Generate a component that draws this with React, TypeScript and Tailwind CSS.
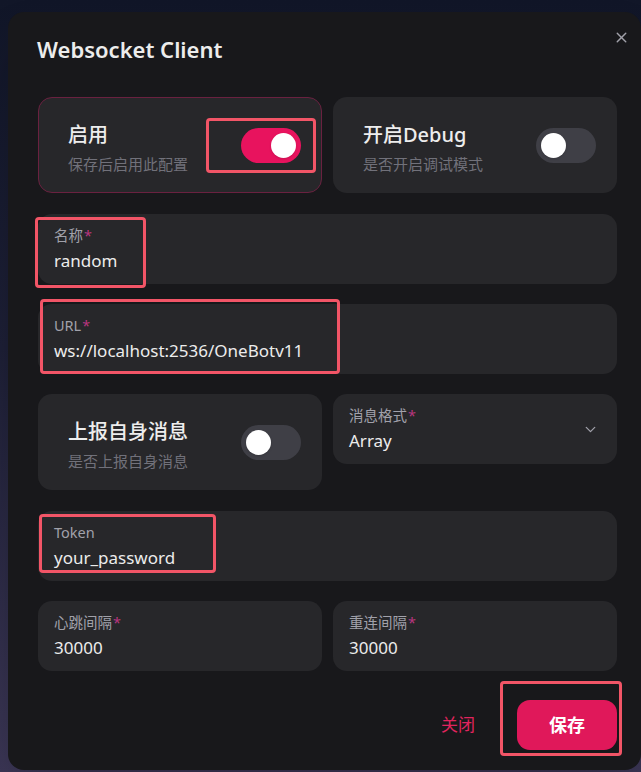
import { X, ChevronDown } from "lucide-react";

const font = "font-['Noto_Sans','Noto_Sans_CJK_SC',sans-serif]";

function Switch({ on }: { on: boolean }) {
  return (
    <div
      className={
        on
          ? "w-[60px] h-[35px] rounded-full bg-[#e8135e] flex items-center justify-end px-[5px] shrink-0"
          : "w-[60px] h-[35px] rounded-full bg-[#3f3f46] flex items-center justify-start px-[5px] shrink-0"
      }
    >
      <div className="w-[25px] h-[25px] rounded-full bg-white shadow-sm" />
    </div>
  );
}

function SwitchCard({ title, desc, on, active }: { title: string; desc: string; on: boolean; active?: boolean }) {
  return (
    <div
      className={
        active
          ? "h-[96px] rounded-[14px] bg-[#27272a] border border-[#6a2140] flex items-center justify-between pl-[29px] pr-[20px]"
          : "h-[96px] rounded-[14px] bg-[#27272a] flex items-center justify-between pl-[30px] pr-[21px]"
      }
    >
      <div className="flex flex-col gap-[5px] pt-[5px]">
        <div className="text-[20px] leading-[28px] font-medium text-[#ededed]">{title}</div>
        <div className="text-[15px] leading-[20px] text-[#71717a]">{desc}</div>
      </div>
      <Switch on={on} />
    </div>
  );
}

function Field({ label, value, required, chevron, className = "" }: { label: string; value: string; required?: boolean; chevron?: boolean; className?: string }) {
  return (
    <div className={"h-[70px] rounded-[14px] bg-[#27272a] pt-[11px] pl-4 pr-[18px] flex items-start justify-between " + className}>
      <div className="flex flex-col">
        <div className="text-[14.5px] leading-[20px] text-[#a1a1aa]">
          {label}
          {required && <span className="text-[#b8367f] ml-[1px]">*</span>}
        </div>
        <div className="mt-[2px] text-[17px] leading-[28px] text-[#ececec]">{value}</div>
      </div>
      {chevron && <ChevronDown size={17} className="text-[#a1a1aa] self-center -mt-[11px]" strokeWidth={1.8} />}
    </div>
  );
}

function Mark({ className }: { className: string }) {
  return <div className={"absolute border-[3px] border-[#f25567] rounded-[4px] pointer-events-none " + className} />;
}

export default function App() {
  return (
    <div className={"min-h-screen w-full bg-[linear-gradient(180deg,#111628_0%,#1d1f36_45%,#3b3655_100%)] pt-[12px] pl-[8px] overflow-hidden " + font}>
      <div className="relative w-[633px] h-[758px] rounded-[16px] bg-[#18181b] shadow-2xl">
        <button className="absolute top-[17px] right-[11px] w-[17px] h-[17px] flex items-center justify-center text-[#a1a1aa]">
          <X size={17} strokeWidth={2} />
        </button>

        <div className="pt-[22px] pl-[29px] text-[22px] leading-[30px] font-semibold text-[#ececec]">Websocket Client</div>

        <div className="mt-[33px] pl-[30px] pr-[24px] flex flex-col gap-5">
          <div className="grid grid-cols-2 gap-x-[11px]">
            <SwitchCard title="启用" desc="保存后启用此配置" on active />
            <SwitchCard title="开启Debug" desc="是否开启调试模式" on={false} />
          </div>
          <Field label="名称" value="random" required className="mt-[1px]" />
          <Field label="URL" value="ws://localhost:2536/OneBotv11" required />
          <div className="grid grid-cols-2 gap-x-[11px] items-start">
            <SwitchCard title="上报自身消息" desc="是否上报自身消息" on={false} />
            <Field label="消息格式" value="Array" required chevron />
          </div>
          <Field label="Token" value="your_password" className="mt-[1px]" />
          <div className="grid grid-cols-2 gap-x-[11px]">
            <Field label="心跳间隔" value="30000" required />
            <Field label="重连间隔" value="30000" required />
          </div>
        </div>

        <div className="mt-[29px] pr-[24px] flex items-center justify-end gap-[42px]">
          <button className="text-[17px] text-[#e0245e]">关闭</button>
          <button className="w-[100px] h-[50px] rounded-[13px] bg-[#e0185a] text-white text-[18px] font-semibold">保存</button>
        </div>

        <Mark className="left-[198px] top-[106px] w-[110px] h-[55px]" />
        <Mark className="left-[27px] top-[205px] w-[111px] h-[71px]" />
        <Mark className="left-[32px] top-[287px] w-[300px] h-[75px]" />
        <Mark className="left-[31px] top-[502px] w-[177px] h-[59px]" />
        <Mark className="left-[492px] top-[669px] w-[122px] h-[75px]" />
      </div>
    </div>
  );
}
